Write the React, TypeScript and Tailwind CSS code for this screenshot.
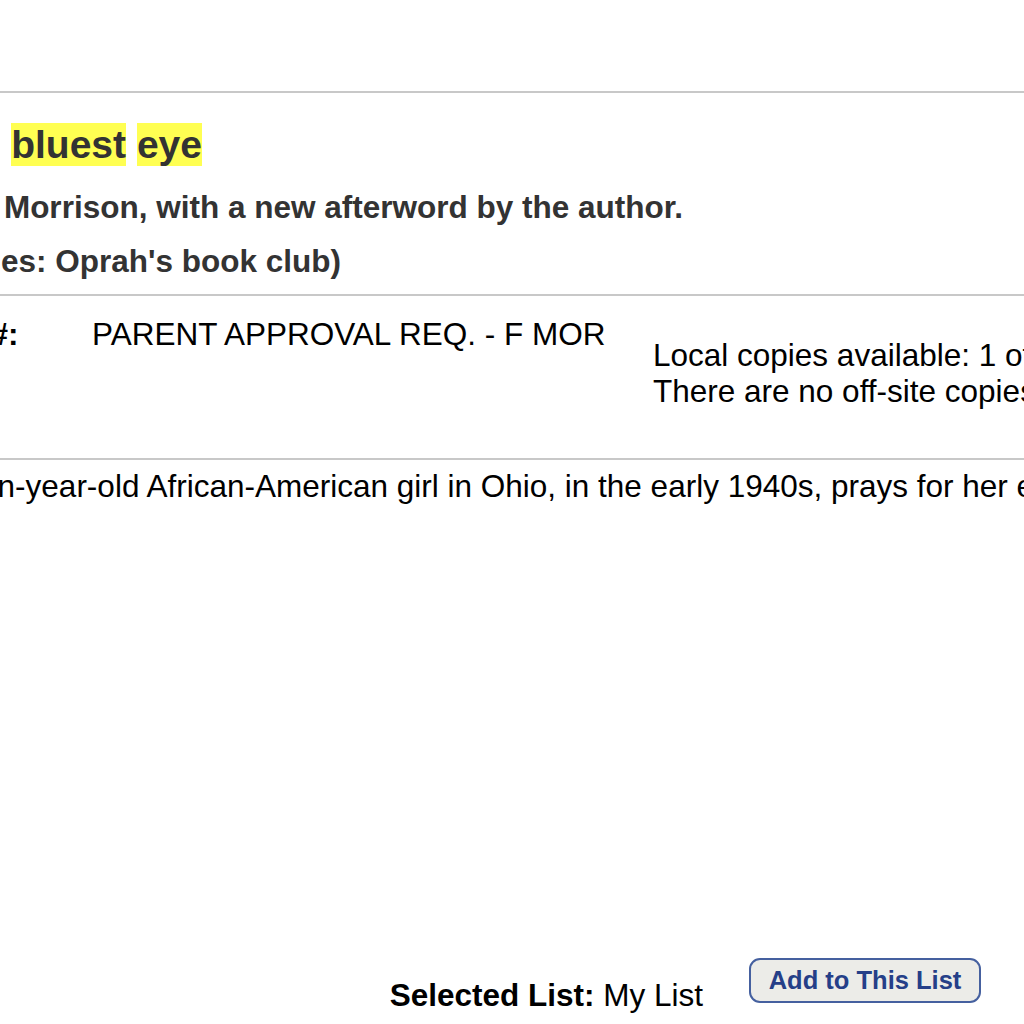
import React from "react";

function Rule() {
  return <div className="h-[2px] w-[1400px] bg-[#c8c8c8]" />;
}

function Hit({ children }: { children: React.ReactNode }) {
  return <span className="bg-[#ffff52]">{children}</span>;
}

export default function App() {
  return (
    <div className="flex h-[1024px] w-[1024px] flex-col overflow-hidden bg-white font-['Liberation_Sans',Arial,sans-serif] text-black">
      <div className="-ml-[69px] flex w-[1400px] flex-col pt-[91px]">
        <Rule />

        <h1 className="mt-[29px] whitespace-nowrap text-[39px] font-bold leading-[45px] text-[#333333]">
          The <Hit>bluest</Hit> <Hit>eye</Hit>
        </h1>
        <p className="mt-[22px] whitespace-nowrap text-[31.5px] font-bold leading-[36px] text-[#333333]">
          Toni Morrison, with a new afterword by the author.
        </p>
        <p className="mt-[18px] whitespace-nowrap text-[31.5px] font-bold leading-[36px] text-[#333333]">
          (Series: Oprah's book club)
        </p>

        <div className="mt-[15px]">
          <Rule />
        </div>

        <div className="flex items-start pb-[49px] pt-[20px] text-[31.5px] leading-[36px]">
          <div className="-ml-[7px] w-[168px] shrink-0 whitespace-nowrap font-bold">Call #:</div>
          <div className="w-[561px] shrink-0 whitespace-nowrap">PARENT APPROVAL REQ. - F MOR</div>
          <div className="mt-[21px] whitespace-nowrap">
            <div>Local copies available: 1 of 1</div>
            <div>There are no off-site copies.</div>
          </div>
        </div>

        <Rule />

        <p className="-ml-[56px] mt-[8px] whitespace-nowrap text-[31.5px] leading-[36px]">
          An eleven-year-old African-American girl in Ohio, in the early 1940s, prays for her eyes to turn blue so that she will be beautiful.
        </p>
      </div>

      <div className="mt-auto flex items-start justify-end gap-[46px] pb-[11px] pr-[43px]">
        <div className="mt-[19px] whitespace-nowrap text-[31.5px] leading-[36px]">
          <span className="font-bold">Selected List:</span> My List
        </div>
        <button className="h-[45px] w-[232px] rounded-[11px] border-[2.5px] border-[#45609f] bg-[#ececE8] text-[25.5px] font-bold leading-none text-[#253f88]">
          Add to This List
        </button>
      </div>
    </div>
  );
}
